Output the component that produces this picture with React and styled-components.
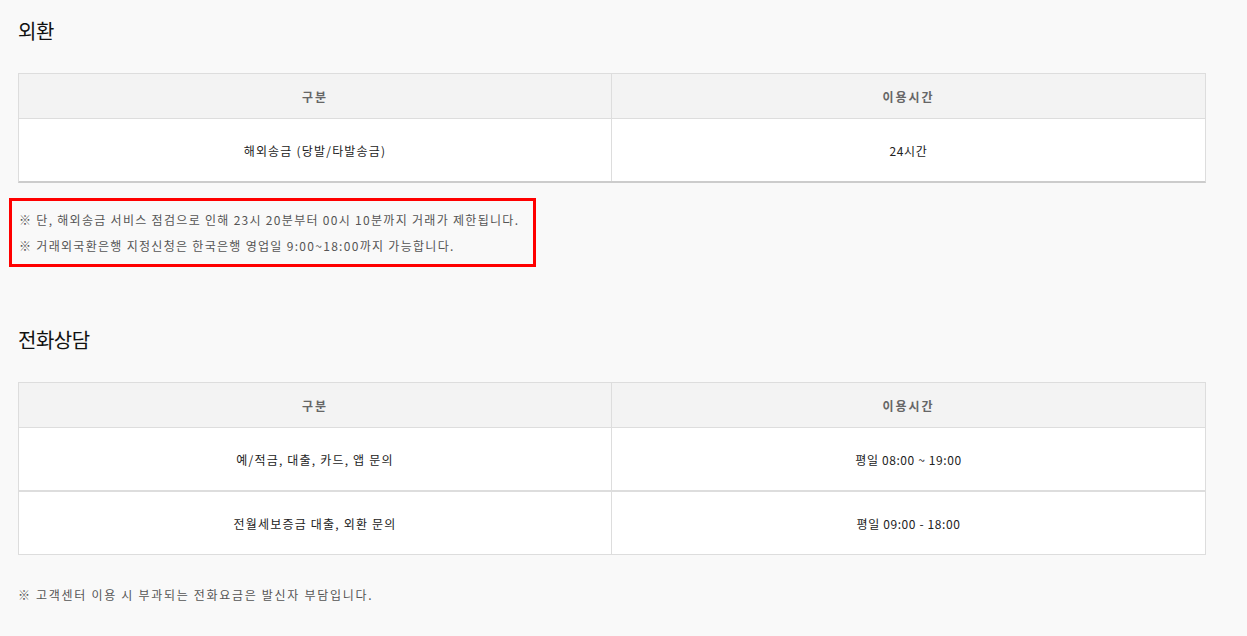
import React from 'react'
import styled, { createGlobalStyle } from 'styled-components'

const Global = createGlobalStyle`
  html, body { margin: 0; padding: 0; background: #f9f9f9; }
  body { font-family: "Noto Sans CJK KR", "Noto Sans", sans-serif; }
`

const Page = styled.div`
  width: 1188px;
  padding: 19px 0 30px 18px;
  display: flex;
  flex-direction: column;
`

const Title = styled.h2`
  margin: 0;
  font-size: 20px;
  line-height: 24px;
  font-weight: 400;
  color: #111;
  letter-spacing: -0.5px;
`

const Table = styled.div`
  margin-top: ${p => p.gap}px;
  display: grid;
  grid-template-columns: 592px 1fr;
  border: 1px solid #dddddd;
  border-bottom: ${p => (p.heavy ? '2px solid #cccccc' : '1px solid #dddddd')};
  background: #fff;
`

const Cell = styled.div`
  height: ${p => (p.head ? 44 : p.h)}px;
  display: flex;
  align-items: center;
  justify-content: center;
  font-size: 12px;
  color: ${p => (p.head ? '#666' : '#222')};
  font-weight: ${p => (p.head ? 700 : 400)};
  letter-spacing: ${p => (p.head ? '2px' : p.right ? '0.6px' : '1.2px')};
  background: ${p => (p.head ? '#f3f3f3' : '#fff')};
  border-top: ${p => (p.first ? 'none' : p.line + 'px solid #dddddd')};
  border-left: ${p => (p.right ? '1px solid #dddddd' : 'none')};
`

const Notice = styled.div`
  margin: 15px 0 0 -9px;
  width: 527px;
  box-sizing: border-box;
  border: 3px solid #ff0000;
  padding: 6px 0 5px 7px;
`

const Note = styled.p`
  margin: 0;
  font-size: 12px;
  line-height: 26px;
  color: #555;
  letter-spacing: 1.3px;
  white-space: nowrap;
`

const Footer = styled(Note)`
  margin-top: 27px;
  letter-spacing: 1.7px;
`

const Second = styled(Title)`
  margin-top: 61px;
`

function InfoTable({ rows, gap, heavy, rowHeight }) {
  return (
    <Table gap={gap} heavy={heavy}>
      <Cell head first>구분</Cell>
      <Cell head first right>이용시간</Cell>
      {rows.map((r, i) => (
        <React.Fragment key={i}>
          <Cell h={rowHeight} line={i === 0 ? 1 : 2}>{r[0]}</Cell>
          <Cell h={rowHeight} line={i === 0 ? 1 : 2} right>{r[1]}</Cell>
        </React.Fragment>
      ))}
    </Table>
  )
}

export default function App() {
  return (
    <Page>
      <Global />
      <Title>외환</Title>
      <InfoTable gap={30} heavy rowHeight={62} rows={[['해외송금 (당발/타발송금)', '24시간']]} />
      <Notice>
        <Note>※ 단, 해외송금 서비스 점검으로 인해 23시 20분부터 00시 10분까지 거래가 제한됩니다.</Note>
        <Note>※ 거래외국환은행 지정신청은 한국은행 영업일 9:00~18:00까지 가능합니다.</Note>
      </Notice>
      <Second>전화상담</Second>
      <InfoTable
        gap={30}
        rowHeight={62}
        rows={[
          ['예/적금, 대출, 카드, 앱 문의', '평일 08:00 ~ 19:00'],
          ['전월세보증금 대출, 외환 문의', '평일 09:00 - 18:00'],
        ]}
      />
      <Footer>※ 고객센터 이용 시 부과되는 전화요금은 발신자 부담입니다.</Footer>
    </Page>
  )
}
